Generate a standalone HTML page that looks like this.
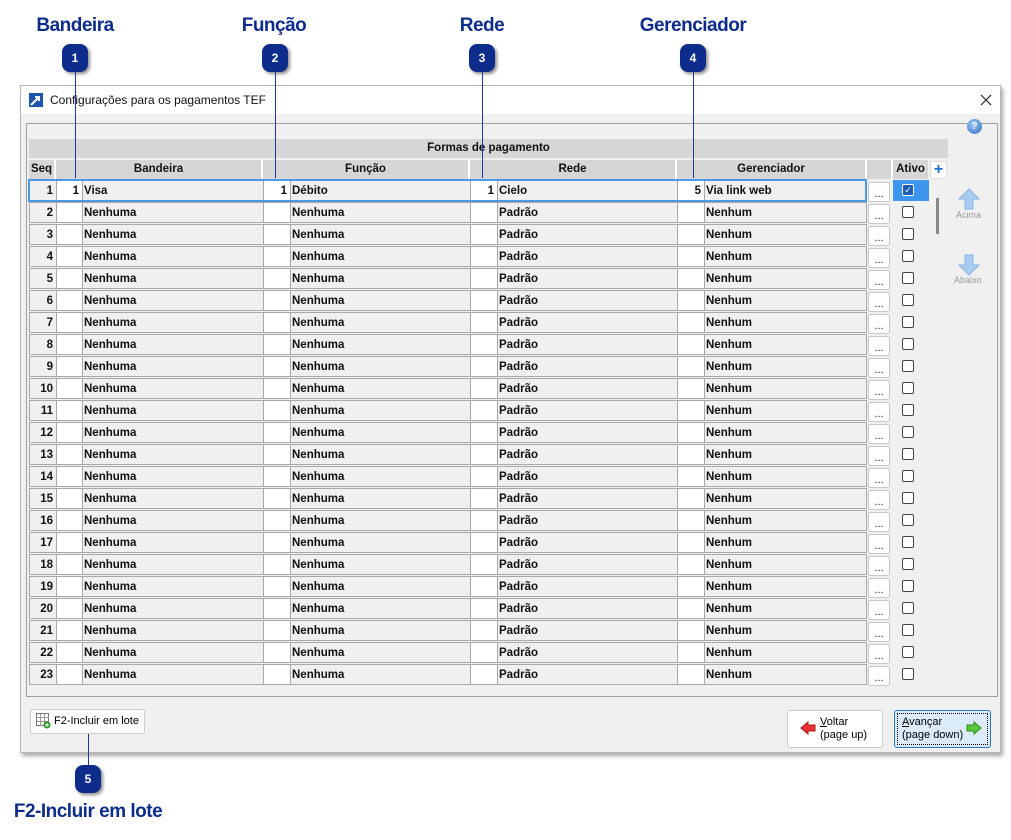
<!DOCTYPE html>
<html><head><meta charset="utf-8">
<style>
*{box-sizing:border-box;margin:0;padding:0}
body{width:1011px;height:840px;background:#fff;position:relative;overflow:hidden;font-family:"Liberation Sans",sans-serif;}
.a{position:absolute}
.lbl{position:absolute;color:#0d2c8c;font-weight:bold;font-size:19px;transform:translateX(-50%);letter-spacing:-0.5px}
.badge{position:absolute;width:26px;height:28px;background:#0d2c8c;border-radius:8px;color:#fff;font-weight:bold;font-size:12px;text-align:center;line-height:28px;box-shadow:2px 2px 3px rgba(0,0,0,.45);transform:translateX(-50%)}
.vl{position:absolute;width:1px;background:#1b3d9a}
.dlg{left:20px;top:85px;width:981px;height:668px;background:#f0f0f0;border:1px solid #b8b8b8;box-shadow:2px 3px 4px rgba(0,0,0,.35)}
.c{position:absolute;border:1px solid #a8a8a8;background:#f0f0f0;font-weight:bold;font-size:11.5px;line-height:20px;height:21px;padding:0 1px;white-space:nowrap;overflow:hidden;color:#111}
.w{background:#fff;text-align:right;padding-right:3px}
.h{position:absolute;background:#d6d6d6;font-weight:bold;font-size:11.5px;text-align:center;line-height:19px;height:19px;color:#111;border-right:2px solid #fff}
.dots{position:absolute;width:22px;height:20px;border:1px solid #c8c8c8;background:#fff;border-radius:2px;font-size:11px;text-align:center;line-height:22px;color:#222}
.cb{position:absolute;width:12px;height:12px;border:1px solid #444;border-radius:2px;background:#fff}
</style></head><body>
<div class="lbl" style="left:75px;top:15px">Bandeira</div>
<div class="lbl" style="left:274px;top:15px">Função</div>
<div class="lbl" style="left:482px;top:15px">Rede</div>
<div class="lbl" style="left:693px;top:15px">Gerenciador</div>
<div class="badge" style="left:75px;top:44px">1</div>
<div class="badge" style="left:275px;top:44px">2</div>
<div class="badge" style="left:482px;top:44px">3</div>
<div class="badge" style="left:693px;top:44px">4</div>

<div class="a dlg">
  <div class="a" style="left:0;top:0;width:979px;height:28px;background:#fff"></div>
  <svg class="a" style="left:8px;top:7px" width="14" height="14"><rect width="14" height="14" fill="#1d56a8"/><path d="M2 12 L10 4 M6 4 H10 V8" stroke="#fff" stroke-width="2" fill="none"/></svg>
  <div class="a" style="left:29px;top:7px;font-size:12px;color:#111">Configurações para os pagamentos TEF</div>
  <svg class="a" style="left:959px;top:8px" width="12" height="12"><path d="M1 1L11 11M11 1L1 11" stroke="#222" stroke-width="1.2"/></svg>
  <div class="a" style="left:5px;top:37px;width:972px;height:574px;border:1px solid #a0a0a0"></div>
  <div class="a" style="left:946px;top:33px;width:15px;height:15px;border-radius:50%;background:radial-gradient(circle at 40% 35%,#9cc8f5,#2a6cc4);color:#fff;font-size:10px;font-weight:bold;text-align:center;line-height:15px">?</div>
</div>

<div class="h" style="left:29px;top:139px;width:919px;border:none">Formas de pagamento</div>
<div class="h" style="left:29px;top:160px;width:27px">Seq</div>
<div class="h" style="left:56px;top:160px;width:207px">Bandeira</div>
<div class="h" style="left:263px;top:160px;width:207px">Função</div>
<div class="h" style="left:470px;top:160px;width:207px">Rede</div>
<div class="h" style="left:677px;top:160px;width:190px">Gerenciador</div>
<div class="h" style="left:867px;top:160px;width:26px"></div>
<div class="h" style="left:893px;top:160px;width:35px;border:none">Ativo</div>
<div class="a" style="left:930px;top:161px;width:17px;height:18px;background:#fff;border:1px solid #ddd;color:#1a6fd0;font-weight:bold;font-size:16px;line-height:15px;text-align:center">+</div>
<div class="a" style="left:936px;top:198px;width:3px;height:36px;background:#888"></div>
<svg class="a" style="left:958px;top:188px" width="22" height="22"><path d="M11 1 L21 11 H15 V21 H7 V11 H1 Z" fill="#a9cdf2" stroke="#8ab4e0"/></svg>
<div class="a" style="left:956px;top:210px;font-size:9px;color:#999">Acima</div>
<svg class="a" style="left:958px;top:254px" width="22" height="22"><path d="M11 21 L21 11 H15 V1 H7 V11 H1 Z" fill="#a9cdf2" stroke="#8ab4e0"/></svg>
<div class="a" style="left:954px;top:275px;font-size:9px;color:#999">Abaixo</div>

<div id="rows"></div>

<div class="vl" style="left:75px;top:72px;height:106px"></div>
<div class="vl" style="left:275px;top:72px;height:106px"></div>
<div class="vl" style="left:482px;top:72px;height:106px"></div>
<div class="vl" style="left:693px;top:72px;height:106px"></div>

<div class="a" style="left:30px;top:709px;width:115px;height:25px;background:#fff;border:1px solid #ccc;border-radius:2px;font-size:11px;line-height:23px;padding-left:23px">F2-Incluir em lote</div>
<svg class="a" style="left:36px;top:713px" width="15" height="16"><rect x=".5" y=".5" width="12" height="12" fill="#fff" stroke="#777"/><path d="M.5 4.5H12.5M.5 8.5H12.5M4.5 .5V12.5M8.5 .5V12.5" stroke="#999"/><circle cx="11" cy="12" r="3.5" fill="#2a9a2a"/><path d="M9 12H13M11 10V14" stroke="#fff"/></svg>
<div class="vl" style="left:88px;top:734px;height:32px"></div>
<div class="badge" style="left:88px;top:765px">5</div>
<div class="lbl" style="left:88px;top:801px">F2-Incluir em lote</div>

<div class="a" style="left:787px;top:710px;width:96px;height:38px;background:#fff;border:1px solid #ccc;border-radius:3px;font-size:11px;line-height:13px;padding:5px 0 0 32px"><u>V</u>oltar<br>(page up)</div>
<svg class="a" style="left:800px;top:721px" width="16" height="14"><path d="M1 7 L8 1 V4 H15 V10 H8 V13 Z" fill="#e83030" stroke="#b01818"/></svg>
<div class="a" style="left:894px;top:710px;width:97px;height:38px;background:#dcebf9;border:1px solid #2a78cc;border-radius:3px;font-size:11px;line-height:13px;padding:5px 0 0 7px"><div style="position:absolute;inset:2px;border:1px dotted #000"></div><u>A</u>vançar<br>(page down)</div>
<svg class="a" style="left:966px;top:721px" width="16" height="14"><path d="M15 7 L8 1 V4 H1 V10 H8 V13 Z" fill="#5ac83a" stroke="#2a9018"/></svg>

<script>
var h='';
for(var i=1;i<=23;i++){
 var y=180+(i-1)*22;
 var f=i==1;
 h+='<div class="c w" style="left:29px;top:'+y+'px;width:28px;background:#f0f0f0">'+i+'</div>';
 var cols=[[56,82,263,f?'1':'',f?'Visa':'Nenhuma'],[263,290,470,f?'1':'',f?'Débito':'Nenhuma'],[470,497,677,f?'1':'',f?'Cielo':'Padrão'],[677,704,866,f?'5':'',f?'Via link web':'Nenhum']];
 cols.forEach(function(c){
  h+='<div class="c w" style="left:'+c[0]+'px;top:'+y+'px;width:'+(c[1]-c[0]+1)+'px">'+c[3]+'</div>';
  h+='<div class="c" style="left:'+c[1]+'px;top:'+y+'px;width:'+(c[2]-c[1]+1)+'px">'+c[4]+'</div>';
 });
 h+='<div class="dots" style="left:868px;top:'+(y+2)+'px">...</div>';
 if(f){
  h+='<div class="a" style="left:893px;top:180px;width:36px;height:21px;background:#3d95ee"></div>';
  h+='<div class="cb" style="left:902px;top:184px;background:#1d5fb8;border-color:#fff;color:#fff;font-size:9px;line-height:10px;text-align:center">✓</div>';
  h+='<div class="a" style="left:28px;top:179px;width:839px;height:23px;border:2px solid #4a98e6"></div>';
 } else h+='<div class="cb" style="left:902px;top:'+(y+4)+'px"></div>';
}
document.getElementById('rows').innerHTML=h;
</script>
</body></html>
